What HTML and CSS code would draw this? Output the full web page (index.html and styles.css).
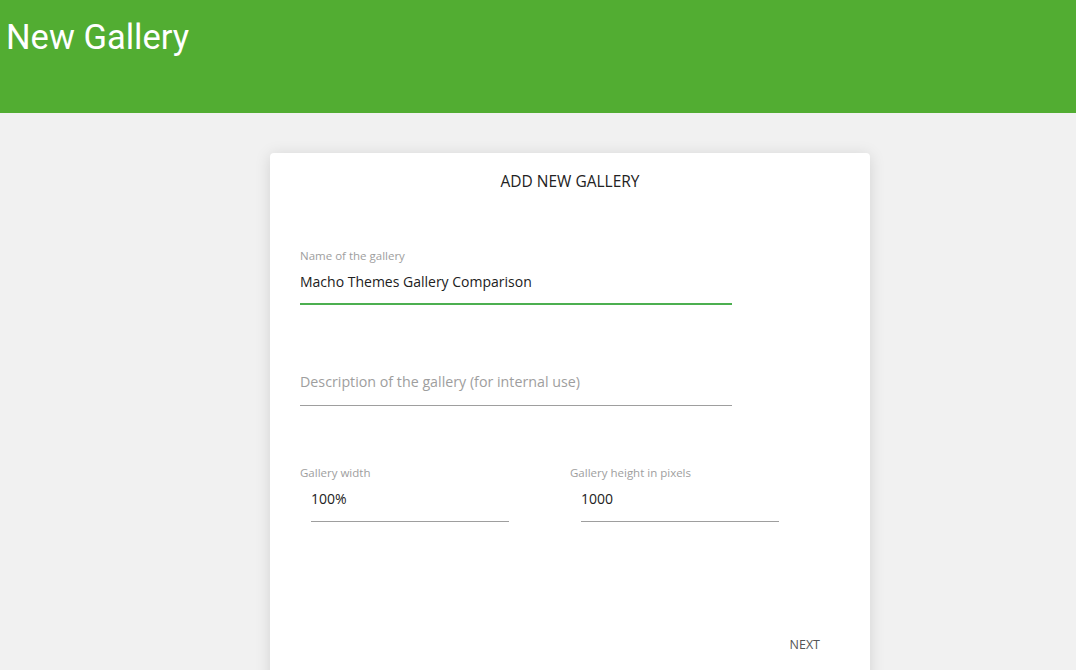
FILE: index.html
```html
<!DOCTYPE html>
<html lang="en">
<head>
    <meta charset="UTF-8">
    <meta name="viewport" content="width=device-width, initial-scale=1.0">
    <title>New Gallery</title>
    <link rel="stylesheet" href="styles.css">
</head>
<body>
    <header class="topbar">
        <h1>New Gallery</h1>
    </header>

    <main class="page">
        <form class="card">
            <h2 class="card-title">ADD NEW GALLERY</h2>

            <div class="field">
                <label for="name">Name of the gallery</label>
                <input id="name" class="focused" type="text" value="Macho Themes Gallery Comparison">
            </div>

            <div class="field spaced">
                <label class="empty" for="desc">&nbsp;</label>
                <input id="desc" type="text" placeholder="Description of the gallery (for internal use)">
            </div>

            <div class="field-row">
                <div class="field small">
                    <label for="width">Gallery width</label>
                    <input id="width" type="text" value="100%">
                </div>
                <div class="field small">
                    <label for="height">Gallery height in pixels</label>
                    <input id="height" type="text" value="1000">
                </div>
            </div>

            <div class="actions">
                <button type="button" class="next">NEXT</button>
            </div>
        </form>
    </main>
</body>
</html>
```

FILE: styles.css
```css
body {
    margin: 0;
    padding: 0;
    background: #f1f1f1;
    font-family: "Open Sans", "Noto Sans", Arial, sans-serif;
    color: #212121;
}

.topbar {
    background: #52ad32;
    height: 113px;
    padding: 0 6px;
    box-sizing: border-box;
}

.topbar h1 {
    margin: 0;
    padding-top: 16px;
    font-family: Roboto, Arial, sans-serif;
    font-weight: 400;
    font-size: 34.5px;
    line-height: 42px;
    color: #fff;
}

.page {
    padding-top: 40px;
    padding-left: 64px;
}

.card {
    width: 600px;
    min-height: 560px;
    margin: 0 auto;
    box-sizing: border-box;
    padding: 18px 30px 20px;
    background: #fff;
    border-radius: 4px;
    box-shadow: 0 2px 16px rgba(0, 0, 0, 0.13);
}

.card-title {
    margin: 0 0 58px;
    text-align: center;
    font-size: 15.5px;
    font-weight: 400;
    line-height: 20px;
    color: #222;
}

.field {
    width: 432px;
}

.field label {
    display: block;
    font-size: 11.5px;
    line-height: 14px;
    color: #9e9e9e;
}

.field input {
    display: block;
    width: 100%;
    box-sizing: border-box;
    margin: 0;
    padding: 9px 0 13px;
    border: none;
    border-bottom: 1px solid #9e9e9e;
    outline: none;
    font-family: inherit;
    font-size: 14px;
    line-height: 20px;
    color: #212121;
    background: transparent;
}

.field input::placeholder {
    color: #9e9e9e;
    font-size: 14.25px;
}

.field input.focused {
    padding-bottom: 11px;
    border-bottom: 2px solid #4caf50;
}

.spaced {
    margin-top: 44px;
}

.field-row {
    display: flex;
    gap: 72px;
    margin-top: 60px;
}

.field.small {
    width: 198px;
}

.field.small input {
    width: 198px;
    margin-left: 11px;
    padding-bottom: 12px;
}

.field.small label {
    white-space: nowrap;
}

.actions {
    display: flex;
    justify-content: flex-end;
    margin-top: 115px;
    padding-right: 20px;
}

.next {
    padding: 0;
    border: none;
    background: none;
    font-family: inherit;
    font-size: 12.5px;
    line-height: 16px;
    color: #555;
    cursor: pointer;
}
```
